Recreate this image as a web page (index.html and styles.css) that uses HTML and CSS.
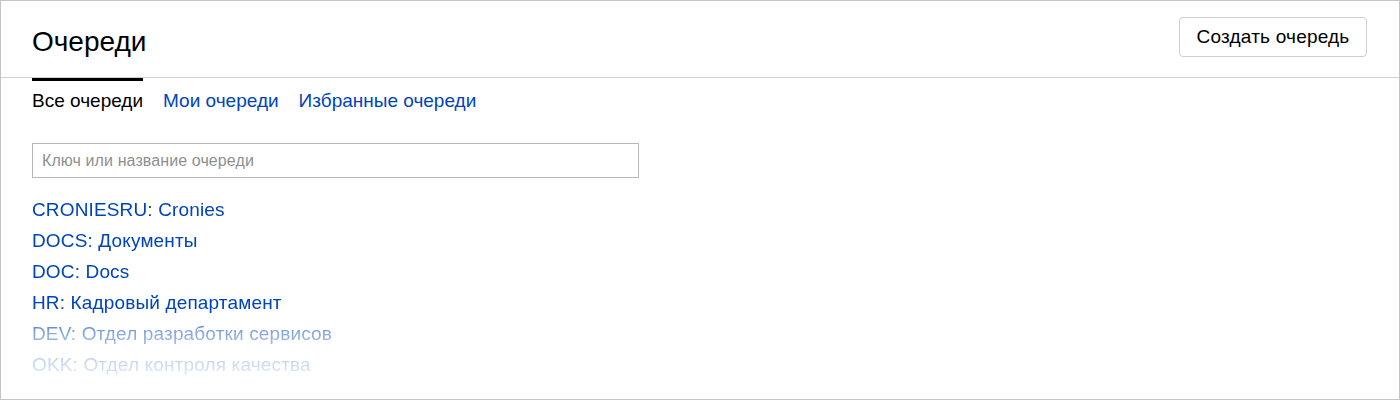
FILE: index.html
```html
<!DOCTYPE html>
<html lang="ru">
<head>
<meta charset="utf-8">
<title>Очереди</title>
<link rel="stylesheet" href="styles.css">
</head>
<body>
<div class="page">
  <header class="header">
    <h1 class="title">Очереди</h1>
    <button class="btn" type="button">Создать очередь</button>
  </header>
  <nav class="tabs">
    <a class="tab tab-active">Все очереди</a>
    <a class="tab" href="#">Мои очереди</a>
    <a class="tab" href="#">Избранные очереди</a>
  </nav>
  <div class="search">
    <input class="search-input" type="text" placeholder="Ключ или название очереди">
  </div>
  <ul class="queues">
    <li><a href="#">CRONIESRU: Cronies</a></li>
    <li><a href="#">DOCS: Документы</a></li>
    <li><a href="#">DOC: Docs</a></li>
    <li><a href="#">HR: Кадровый департамент</a></li>
    <li><a href="#">DEV: Отдел разработки сервисов</a></li>
    <li><a href="#">OKK: Отдел контроля качества</a></li>
  </ul>
</div>
</body>
</html>
```

FILE: styles.css
```css
html, body {
  margin: 0;
  padding: 0;
  background: #fff;
}
body {
  font-family: "Liberation Sans", Arial, sans-serif;
  color: #000;
}
.page {
  box-sizing: border-box;
  width: 1400px;
  height: 400px;
  border: 1px solid #c4c4c4;
  overflow: hidden;
}
.header {
  box-sizing: border-box;
  height: 77px;
  border-bottom: 1px solid #d0d0d0;
  display: flex;
  justify-content: space-between;
  align-items: flex-start;
  padding: 16px 32px 0 31px;
}
.title {
  margin: 9px 0 0;
  font-size: 28px;
  font-weight: 400;
  line-height: 32px;
}
.btn {
  box-sizing: border-box;
  width: 188px;
  height: 40px;
  border: 1px solid #cfcfcf;
  border-radius: 4px;
  background: #fff;
  font-family: inherit;
  font-size: 19px;
  letter-spacing: 0.2px;
  color: #000;
  padding: 0;
}
.tabs {
  display: flex;
  gap: 20px;
  padding: 0 31px;
}
.tab {
  display: block;
  border-top: 3px solid transparent;
  padding-top: 9px;
  font-size: 19px;
  line-height: 22px;
  color: #0044bb;
  text-decoration: none;
}
.tab-active {
  border-top-color: #000;
  color: #000;
}
.search {
  padding: 31px 31px 0;
}
.search-input {
  box-sizing: border-box;
  display: block;
  width: 607px;
  height: 35px;
  border: 1px solid #b8b8b8;
  border-radius: 0;
  padding: 0 9px;
  font-family: inherit;
  font-size: 16px;
  letter-spacing: 0.1px;
  color: #000;
  outline: none;
}
.search-input::placeholder {
  color: #8f8f8f;
}
.queues {
  list-style: none;
  margin: 0;
  padding: 16px 31px 0;
  -webkit-mask-image: linear-gradient(to bottom, #000 0, #000 134px, rgba(0,0,0,0.46) 155px, rgba(0,0,0,0.2) 186px, rgba(0,0,0,0.05) 212px, transparent 222px);
  mask-image: linear-gradient(to bottom, #000 0, #000 134px, rgba(0,0,0,0.46) 155px, rgba(0,0,0,0.2) 186px, rgba(0,0,0,0.05) 212px, transparent 222px);
}
.queues li {
  font-size: 19px;
  letter-spacing: 0.15px;
  line-height: 31px;
}
.queues a {
  color: #0044bb;
  text-decoration: none;
}
```
